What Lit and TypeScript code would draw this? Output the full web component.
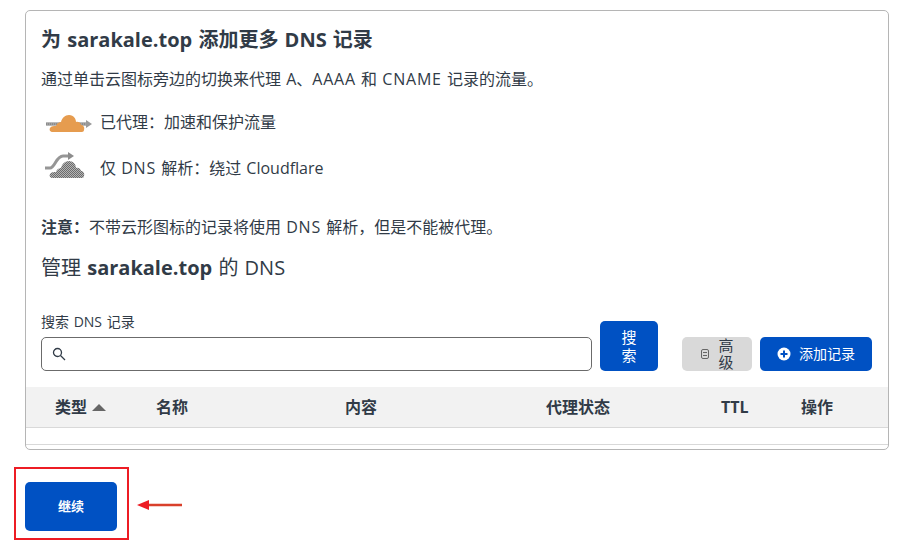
import { LitElement, html, css } from "lit";
import { customElement } from "lit/decorators.js";

@customElement("app-root")
export class AppRoot extends LitElement {
  static styles = css`
    :host {
      display: block;
      position: relative;
      width: 909px;
      height: 546px;
      overflow: hidden;
      background: #fff;
      color: #313b47;
      font-family: "Open Sans", "Noto Sans CJK SC", sans-serif;
      font-size: 16px;
      line-height: 22px;
    }
    .page { padding: 10px 20px 0 25px; display: flex; flex-direction: column; }
    .card {
      border: 1px solid #b5b5b5;
      border-radius: 5px;
      height: 440px;
      box-sizing: border-box;
      display: flex;
      flex-direction: column;
    }
    .body { padding: 16px 15px 0; height: 376px; box-sizing: border-box; display: flex; flex-direction: column; }
    h2 { margin: 0; font-size: 20px; line-height: 26px; font-weight: 700; color: #313b47; word-spacing: 1px; }
    .caps { letter-spacing: 0.8px; }
    .intro { margin: 15px 0 0; height: 22px; word-spacing: 1px; }
    .legend { display: flex; align-items: center; gap: 9px; height: 30px; word-spacing: 1px; }
    .legend.first { margin-top: 17px; }
    .legend.second { margin-top: 16px; }
    .legend svg { display: block; flex: none; overflow: visible; }
    .note { margin: 33px 0 0; word-spacing: 1px; }
    h3 { margin: 16px 0 0; font-size: 20px; line-height: 28px; font-weight: 400; word-spacing: 1px; }
    .toolbar { display: flex; align-items: flex-end; margin-top: 31px; }
    .field { width: 551px; display: flex; flex-direction: column; }
    .field label { font-size: 14px; line-height: 18px; margin-bottom: 6px; word-spacing: 1px; }
    .input {
      height: 34px;
      box-sizing: border-box;
      border: 1px solid #6b6b6b;
      border-radius: 5px;
      display: flex;
      align-items: center;
      padding-left: 10px;
    }
    .btn {
      border: 0;
      border-radius: 5px;
      font-family: inherit;
      font-size: 15px;
      line-height: 18px;
      background: #0051c3;
      color: #fff;
      box-sizing: border-box;
      display: flex;
      align-items: center;
      justify-content: center;
      padding: 0;
    }
    .search { width: 58px; height: 50px; margin-left: 8px; padding: 0 21px; }
    .adv { width: 70px; height: 34px; margin-left: 24px; background: #d9d9d9; color: #313b47; gap: 10px; line-height: 17px; }
    .adv span { width: 15px; }
    .add { width: 112px; height: 34px; margin-left: 8px; gap: 8px; font-size: 14px; }
    .thead {
      height: 41px;
      box-sizing: border-box;
      background: #f2f2f2;
      border-bottom: 1px solid #d9d9d9;
      display: grid;
      grid-template-columns: 101px 189px 201px 175px 80px 1fr;
      align-items: center;
      font-weight: 700;
      font-size: 16px;
      padding-left: 29px;
    }
    .thead .sort { display: flex; align-items: center; gap: 5px; }
    .spacer { height: 17px; box-sizing: border-box; border-bottom: 1px solid #d9d9d9; }
    .continue { width: 92px; height: 49px; margin-top: 32px; font-size: 13px; font-weight: 700; padding-bottom: 2px; }
    .mark { position: absolute; left: 14px; top: 467px; width: 115px; height: 73px; box-sizing: border-box; border: 2px solid #ed1c24; }
    .arrow { position: absolute; left: 137px; top: 498px; display: block; }
  `;

  render() {
    const cloud = "M12 25C9 25 8 23 9 21C10 19 13 19 15 19C16 16 18 15 20 15C21 11 24 8 28 8C33 8 35 12 35 15C36 14 40 15 40 18C42 18 44 20 43 23C43 24 42 25 41 25Z";
    return html`
      <div class="page">
        <section class="card">
          <div class="body">
            <h2>为 sarakale.top 添加更多 DNS 记录</h2>
            <p class="intro">通过单击云图标旁边的切换来代理 A、<span class="caps">AAAA</span> 和 <span class="caps">CNAME</span> 记录的流量。</p>
            <div class="legend first">
              <svg width="50" height="30" viewBox="0 0 50 30">
                <path d="M5 17H46" stroke="#a3a3a3" stroke-width="3.5"/>
                <path d="M5 17H46" stroke="#777" stroke-width="1" stroke-dasharray="1 1"/>
                <path d="M45 13l6 4-6 4z" fill="#9a9a9a"/>
                <path d=${cloud} fill="#e69c4f"/>
              </svg>
              <span>已代理：加速和保护流量</span>
            </div>
            <div class="legend second">
              <svg width="50" height="30" viewBox="0 0 50 30">
                <defs>
                  <pattern id="dots" width="2" height="2" patternUnits="userSpaceOnUse">
                    <rect width="2" height="2" fill="#b4b4b4"/>
                    <rect width="1" height="1" fill="#6c6c6c"/>
                    <rect x="1" y="1" width="1" height="1" fill="#6c6c6c"/>
                  </pattern>
                </defs>
                <path d="M4 15H9C14 15 15 3 22 3H29" fill="none" stroke="#969696" stroke-width="3"/>
                <path d="M27 -1l6 4-6 4z" fill="#8c8c8c"/>
                <path d=${cloud} fill="url(#dots)"/>
              </svg>
              <span>仅 <span class="caps">DNS</span> 解析：绕过 Cloudflare</span>
            </div>
            <p class="note"><strong>注意：</strong>不带云形图标的记录将使用 <span class="caps">DNS</span> 解析，但是不能被代理。</p>
            <h3>管理 <strong>sarakale.top</strong> 的 DNS</h3>
            <div class="toolbar">
              <div class="field">
                <label>搜索 DNS 记录</label>
                <div class="input">
                  <svg width="14" height="14" viewBox="0 0 14 14" fill="none" stroke="#313b47" stroke-width="1.3">
                    <circle cx="5.5" cy="5.5" r="4"/><path d="M8.5 8.5L13 13"/>
                  </svg>
                </div>
              </div>
              <button class="btn search">搜索</button>
              <button class="btn adv">
                <svg width="8" height="10" viewBox="0 0 8 10" fill="none" stroke="#666" stroke-width="1">
                  <rect x=".5" y=".5" width="7" height="9" rx="1.5"/><path d="M2 3.5H6M2 6.5H6"/>
                </svg>
                <span>高级</span>
              </button>
              <button class="btn add">
                <svg width="14" height="14" viewBox="0 0 14 14">
                  <circle cx="7" cy="7" r="6.5" fill="#fff"/><path d="M7 3.5V10.5M3.5 7H10.5" stroke="#0051c3" stroke-width="2"/>
                </svg>
                添加记录
              </button>
            </div>
          </div>
          <div class="thead">
            <div class="sort">类型
              <svg width="14" height="7" viewBox="0 0 14 7"><path d="M7 0L14 7H0z" fill="#666"/></svg>
            </div>
            <div>名称</div><div>内容</div><div>代理状态</div><div>TTL</div><div>操作</div>
          </div>
          <div class="spacer"></div>
        </section>
        <button class="btn continue">继续</button>
      </div>
      <div class="mark"></div>
      <svg class="arrow" width="46" height="14" viewBox="0 0 46 14">
        <path d="M10 7H45" stroke="#d9402b" stroke-width="2.5"/>
        <path d="M0 7L12 2V12z" fill="#ed1c24"/>
      </svg>
    `;
  }
}
